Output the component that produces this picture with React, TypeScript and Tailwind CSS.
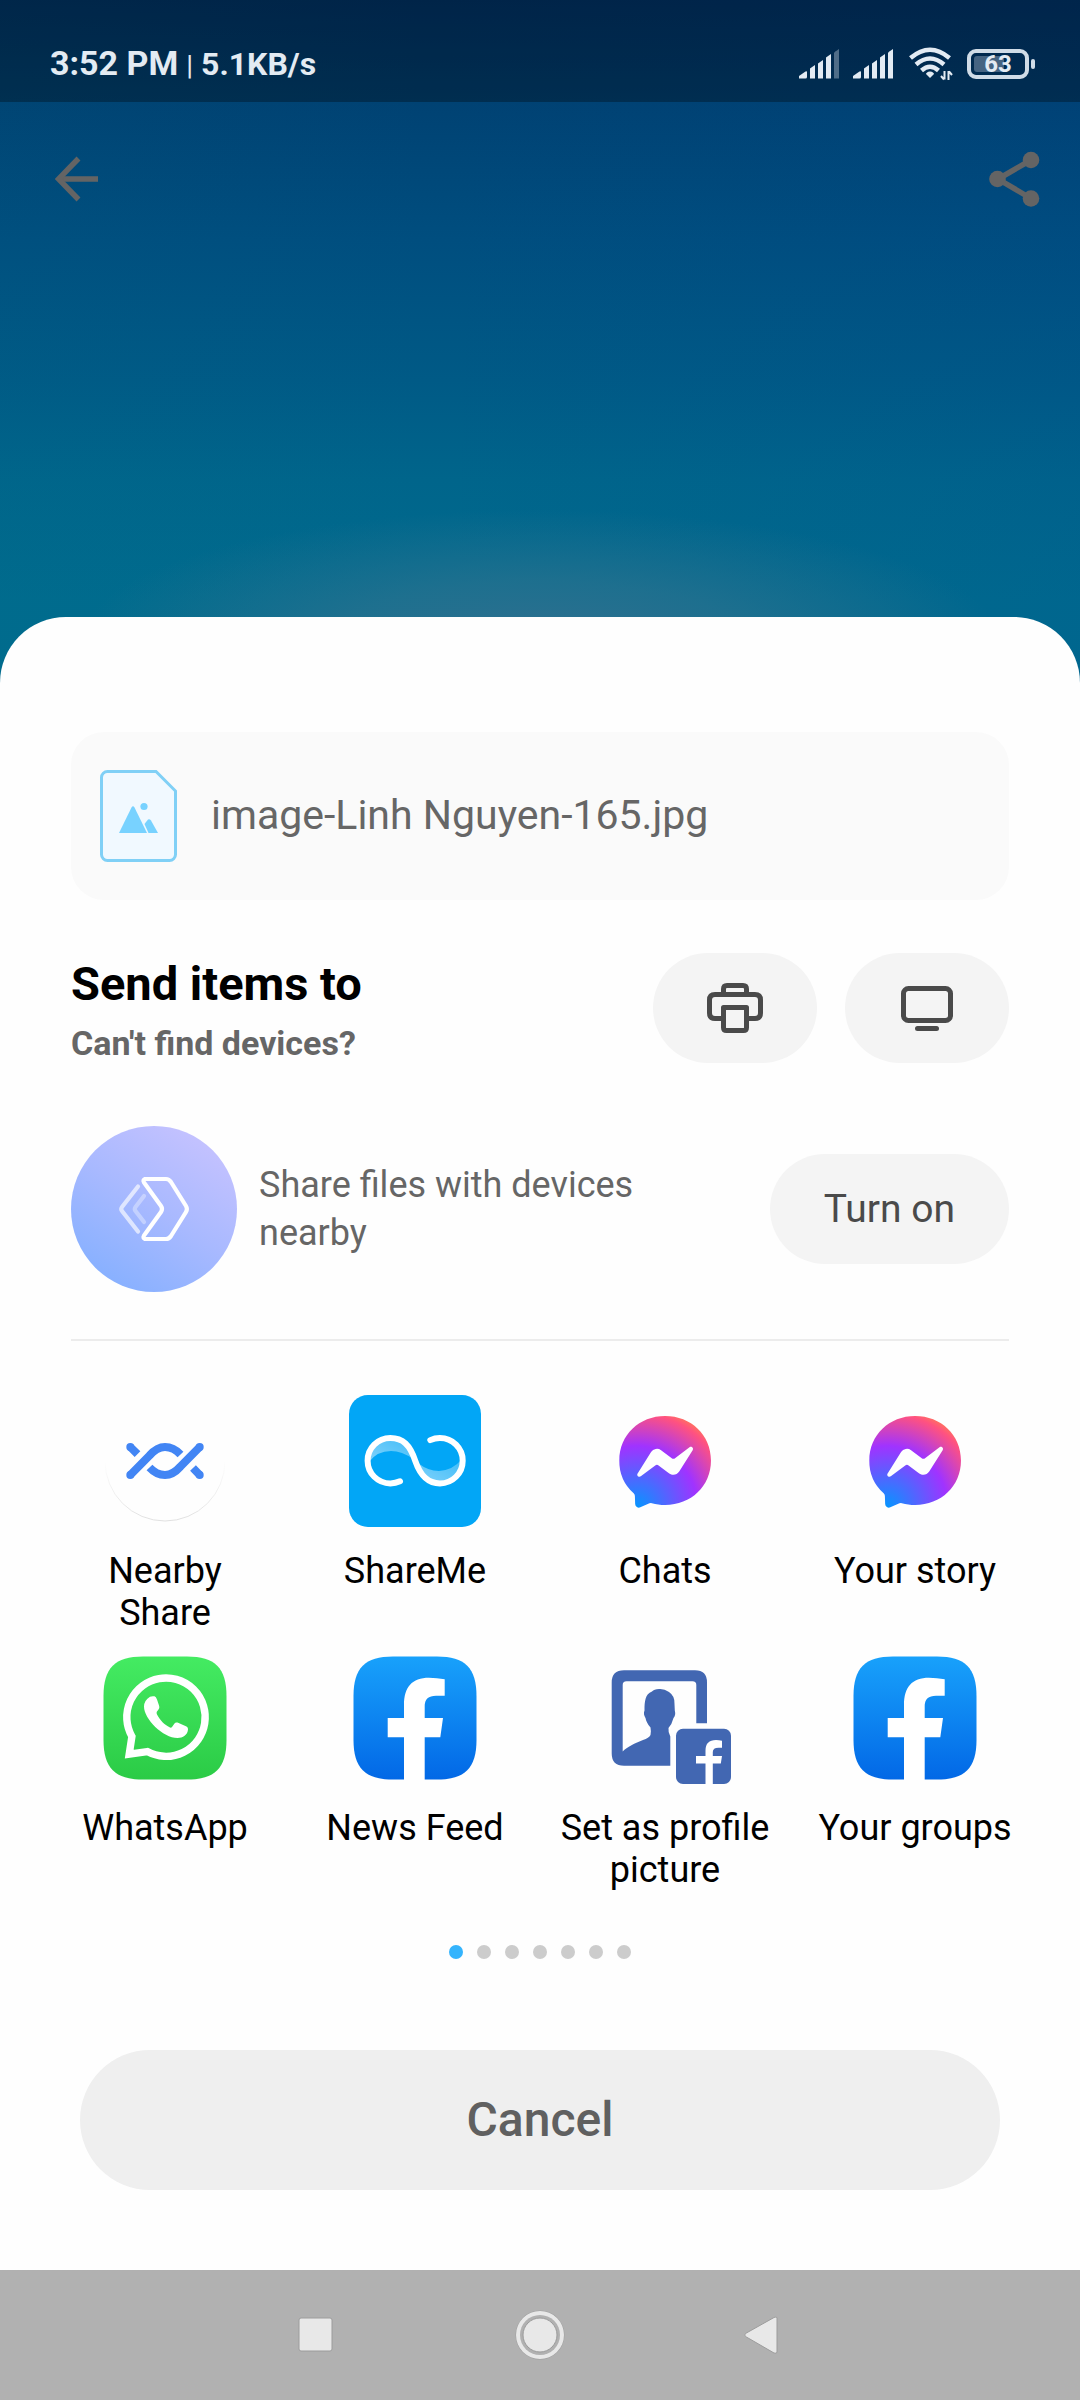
import type { ReactNode } from "react";

function SignalIcon({ weak = false }: { weak?: boolean }) {
  return (
    <svg width="40" height="30" viewBox="0 0 40 30" fill="#e3ebf3" aria-hidden="true">
      <path d="M0 29.5V27L6.500 22.5Q8 21.8 8 23V28Q8 29.5 6.5 29.5Z" />
      <path d="M11 19.5L16 16V29.5H11Z" />
      <path d="M19 14.5L24 11V29.5H19Z" />
      <path d="M27 8.5L32 5V29.5H27Z" />
      <path d="M35 4Q35 3 40 0V29.5H35Z" opacity={weak ? 0.35 : 1} />
    </svg>
  );
}

function WifiIcon() {
  return (
    <svg width="44" height="34" viewBox="0 0 44 34" fill="none" stroke="#e3ebf3" strokeWidth="4.5" aria-hidden="true">
      <path d="M1.5 11Q21 -5.5 40.5 11" />
      <path d="M7 17.5Q21 5.5 35 17.5" />
      <path d="M12.5 23.5Q21 16 29.5 23.5" />
      <path d="M21 24.5C23.5 24.5 25 26 25 27L21 31L17 27C17 26 18.5 24.5 21 24.5Z" fill="#e3ebf3" stroke="none" />
      <path d="M35.5 24V32.5M39.5 33V24M32 29L35 32.5M43 28L40 24.5" strokeWidth="2" />
    </svg>
  );
}

function StatusBar() {
  return (
    <div className="flex h-[102px] items-center justify-between bg-black/30 pt-11 pr-[45px] pb-[18px] pl-[50px] font-bold text-[#e3ebf3]">
      <div className="flex items-baseline gap-2">
        <span className="text-[34px] leading-10">3:52 PM</span>
        <span className="text-[28px] leading-10 font-normal">|</span>
        <span className="text-[32px] leading-10">5.1KB/s</span>
      </div>
      <div className="flex items-center">
        <SignalIcon weak />
        <span className="w-3.5" />
        <SignalIcon />
        <span className="w-4" />
        <WifiIcon />
        <span className="w-3.5" />
        <div className="relative flex h-[30px] w-[62px] items-center justify-center rounded-[9px] border-4 border-[#d0dce7]">
          <span className="absolute top-[3px] left-[3px] h-4 w-[30px] rounded-[3px] bg-[#456482]" />
          <span className="relative text-[24px] leading-6 font-bold">63</span>
        </div>
        <span className="ml-0.5 h-[10px] w-1 rounded-sm bg-[#d0dce7]" />
      </div>
    </div>
  );
}

function PreviewHeader() {
  return (
    <div className="flex h-[515px] items-start justify-between pt-[49px] pr-10 pl-[55px]">
      <button type="button" aria-label="Back">
        <svg width="44" height="56" viewBox="0 0 44 56" fill="none" stroke="#646464" strokeWidth="5.5" aria-hidden="true">
          <path d="M3 28H43" />
          <path d="M23.5 7.5L3.5 28L23.5 48.5" />
        </svg>
      </button>
      <button type="button" aria-label="Share">
        <svg width="51" height="56" viewBox="0 0 51 56" fill="#646464" aria-hidden="true">
          <path d="M42 9L9 28L42 47.5" fill="none" stroke="#646464" strokeWidth="5.5" />
          <circle cx="42" cy="9" r="8.3" />
          <circle cx="8.5" cy="28" r="8.3" />
          <circle cx="42" cy="47.5" r="8.3" />
        </svg>
      </button>
    </div>
  );
}

function ImageFileIcon() {
  return (
    <svg width="77" height="92" viewBox="0 0 77 92" aria-hidden="true">
      <path
        d="M7.5 1.5H56L75.5 21V84.5A6 6 0 0 1 69.5 90.5H7.5A6 6 0 0 1 1.5 84.5V7.5A6 6 0 0 1 7.5 1.5Z"
        fill="#f1f9ff"
        stroke="#80d0f6"
        strokeWidth="3"
      />
      <path d="M19 63L31.5 37.5Q33 35 34.5 37.5L47 63Z" fill="#78d2ff" />
      <path d="M44.500 54L48 49.5Q49.5 48.5 51 50.5L58 63H48.5Z" fill="#78d2ff" />
      <circle cx="44" cy="36.5" r="3.6" fill="#78d2ff" />
    </svg>
  );
}

function PrinterIcon() {
  return (
    <svg width="56" height="50" viewBox="0 0 56 50" fill="none" stroke="#4a4a4a" strokeWidth="5" aria-hidden="true">
      <path d="M16.5 11V6Q16.5 2.5 20 2.5H36Q39.5 2.5 39.5 6V11" />
      <path d="M16 35.5H8Q2.5 35.5 2.5 30V17Q2.5 11.5 8 11.5H48Q53.5 11.5 53.5 17V30Q53.5 35.5 48 35.5H40" />
      <path d="M16.5 24.5H39.5V44.5Q39.5 47.5 36.5 47.5H19.5Q16.5 47.5 16.5 44.5Z" strokeLinejoin="round" />
    </svg>
  );
}

function ScreenIcon() {
  return (
    <svg width="52" height="45" viewBox="0 0 52 45" fill="none" stroke="#4a4a4a" strokeWidth="5" aria-hidden="true">
      <rect x="2.5" y="2.5" width="47" height="32" rx="5" />
      <path d="M16.5 42.5H35.5" strokeLinecap="round" />
    </svg>
  );
}

function DeviceShareIcon() {
  return (
    <svg width="166" height="166" viewBox="0 0 166 166" fill="none" className="shrink-0" aria-hidden="true">
      <defs>
        <linearGradient id="device" x1="0.2" y1="0.95" x2="0.8" y2="0.05">
          <stop offset="0" stopColor="#86b0ff" />
          <stop offset="0.5" stopColor="#a8b9ff" />
          <stop offset="1" stopColor="#c5c2ff" />
        </linearGradient>
      </defs>
      <circle cx="83" cy="83" r="83" fill="url(#device)" />
      <g stroke="#fff" strokeWidth="4.2" strokeLinecap="round" strokeLinejoin="round">
        <path d="M74 53H95Q98 53 100 56L115 80Q116.8 83 115 86L100 110Q98 113 95 113H74Q71.5 112 73 109.5L90 86Q92 83 90 80L73 56.5Q71.5 54 74 53Z" />
        <path d="M67 60.5L51 81Q49.5 83 51 85L67 105.5" opacity="0.65" />
        <path d="M73 70L64.5 81Q63 83 64.5 85L73 96" opacity="0.35" />
      </g>
    </svg>
  );
}

const iconBox = { width: 132, height: 132, viewBox: "0 0 132 132", "aria-hidden": true } as const;

function NearbyShareLogo() {
  return (
    <svg {...iconBox} fill="none">
      <defs>
        <linearGradient id="rim" x1="0" y1="0" x2="0" y2="1">
          <stop offset="0.5" stopColor="#e4e4e4" stopOpacity="0" />
          <stop offset="1" stopColor="#e0e0e0" />
        </linearGradient>
      </defs>
      <circle cx="66" cy="66" r="60" stroke="url(#rim)" />
      <g stroke="#4285f4" strokeWidth="8">
        <path d="M31.3 52L38.5 59.2M94 73L100.7 80" />
        <path d="M31.3 80L50.5 60.5Q58 52 66 52Q74.5 52 81.5 59.5" />
        <path d="M50.5 72.5Q57.5 80 66 80Q74 80 81.5 71.5L100.7 52" />
      </g>
      <g fill="#4285f4">
        <circle cx="31.3" cy="52" r="4" />
        <circle cx="31.3" cy="80" r="4" />
        <circle cx="100.7" cy="52" r="4" />
        <circle cx="100.7" cy="80" r="4" />
      </g>
    </svg>
  );
}

function ShareMeLogo() {
  return (
    <svg {...iconBox} fill="none">
      <defs>
        <linearGradient id="wave" x1="0" y1="1" x2="1" y2="0">
          <stop offset="0" stopColor="#fff" stopOpacity="0.5" />
          <stop offset="1" stopColor="#fff" stopOpacity="0.25" />
        </linearGradient>
      </defs>
      <rect width="132" height="132" rx="19" fill="#02a6f6" />
      <path d="M20 67A22.7 22.7 0 0 1 41.3 43C54 43 60 51 64 64Q53 56 42 56Q28 56 20 67Z" fill="url(#wave)" />
      <path d="M112 65A22.7 22.7 0 0 1 91 88.4C79 88.4 73 81 69 68Q79 76 90 76Q104 75 112 65Z" fill="url(#wave)" />
      <path
        d="M51 86.3A22.7 22.7 0 0 1 41.3 88.4A22.7 22.7 0 0 1 41.3 43C54 43 61 50 66.2 65.7C71.5 81 79 88.4 91 88.4A22.7 22.7 0 0 0 91 43A22.7 22.7 0 0 0 81.3 45.1"
        stroke="#fff"
        strokeWidth="6"
        strokeLinecap="round"
      />
    </svg>
  );
}

function MessengerLogo() {
  return (
    <svg {...iconBox}>
      <defs>
        <radialGradient id="messenger" cx="0.19" cy="0.99" r="1.09">
          <stop offset="0" stopColor="#0695ff" />
          <stop offset="0.61" stopColor="#a033ff" />
          <stop offset="0.935" stopColor="#ff5280" />
          <stop offset="1" stopColor="#ff7061" />
        </radialGradient>
      </defs>
      <g transform="translate(20.3 21) scale(3.82)">
        <path
          fill="url(#messenger)"
          d="M.001 11.639C.001 4.95 5.241 0 12.001 0S24 4.95 24 11.639c0 6.689-5.24 11.638-12 11.638-1.21 0-2.38-.16-3.47-.46a.96.96 0 0 0-.64.05l-2.39 1.05a.96.96 0 0 1-1.35-.85l-.07-2.14a.97.97 0 0 0-.32-.68A11.39 11.389 0 0 1 .002 11.64zm8.32-2.19l-3.52 5.6c-.35.53.32 1.139.82.75l3.79-2.87c.26-.2.6-.2.87 0l2.8 2.1c.84.63 2.04.4 2.6-.48l3.52-5.6c.35-.53-.32-1.13-.82-.75l-3.79 2.87c-.25.2-.6.2-.86 0l-2.8-2.1a1.8 1.8 0 0 0-2.61.48z"
        />
      </g>
    </svg>
  );
}

const roundedTile =
  "M44 4.5H88C116 4.5 127.5 16 127.5 44V88C127.5 116 116 127.5 88 127.5H44C16 127.5 4.5 116 4.5 88V44C4.5 16 16 4.5 44 4.5Z";

function WhatsAppLogo() {
  return (
    <svg {...iconBox} fill="none">
      <defs>
        <linearGradient id="whatsapp" x1="0" y1="0" x2="0" y2="1">
          <stop offset="0" stopColor="#44eb62" />
          <stop offset="1" stopColor="#2bcb46" />
        </linearGradient>
      </defs>
      <path d={roundedTile} fill="url(#whatsapp)" />
      <path d="M48.3 99.6L30.2 102.2L32.9 84.5A39.2 39.2 0 1 1 48.3 99.6Z" stroke="#fff" strokeWidth="7.4" />
      <path
        d="M51 44.8Q53 43.8 55.5 44.3Q57 44.8 58 47.5L60.2 54Q60.8 56 59.5 57.5L57.8 59.8Q57.2 60.8 58 62.5C61.5 68.5 65 72.5 71 75.5Q72.3 76 73 75L75.5 71.5Q76.5 70 78.5 70.6L87.5 74.5Q89.3 75.5 89 77.5C88.5 83 84 86 78.5 86C64 86 45 67 45 54.5Q45.2 48.3 51 44.8Z"
        fill="#fff"
      />
    </svg>
  );
}

function FacebookLogo() {
  return (
    <svg {...iconBox}>
      <defs>
        <linearGradient id="facebook" x1="0" y1="0" x2="0" y2="1">
          <stop offset="0" stopColor="#18a1fb" />
          <stop offset="1" stopColor="#0268e6" />
        </linearGradient>
      </defs>
      <path d={roundedTile} fill="url(#facebook)" />
      <path
        d="M55 128V85.3H38.7V66H55V53C55 35 63 25.7 80 25.7Q88 25.7 95.7 27.3V43.7H87Q75.7 43.7 75.7 54V66H94L91.3 85.3H75.7V128Z"
        fill="#fff"
      />
    </svg>
  );
}

function ProfilePictureLogo() {
  return (
    <svg {...iconBox} fill="#4267b2">
      <path d="M25 18.3H96Q108 18.3 108 30.5V71.3H97.3V33Q97.3 29.3 93.5 29.3H27.5Q23.7 29.3 23.7 33V99.5C28 95 36 91 44 88Q50 86 51.500 83C52 80.5 52 78 51.5 75.5C48.5 72 47 69 46.500 66Q44 62 45.500 58.5C45.500 50 46 42 53 39.500Q55 37 60 37Q65 36.500 70 40Q76 44 75.5 52L75.8 58.5Q77 63 74.5 66Q73 72 69.5 76Q69 80 71.3 84.5V113.7H25Q12.7 113.7 12.7 101.5V30.5Q12.7 18.3 25 18.3Z" />
      <rect x="77" y="76.7" width="55" height="55.3" rx="7" />
      <path
        d="M106.5 132V111.500H97V104H106.5V98.5Q106.5 88 117 88Q120 88 123 88.7V95.7H119.5Q113.8 95.7 113.8 100V104H123L121.8 111.5H113.8V132Z"
        fill="#fff"
      />
    </svg>
  );
}

const apps: { label: string; logo: ReactNode }[] = [
  { label: "Nearby Share", logo: <NearbyShareLogo /> },
  { label: "ShareMe", logo: <ShareMeLogo /> },
  { label: "Chats", logo: <MessengerLogo /> },
  { label: "Your story", logo: <MessengerLogo /> },
  { label: "WhatsApp", logo: <WhatsAppLogo /> },
  { label: "News Feed", logo: <FacebookLogo /> },
  { label: "Set as profile picture", logo: <ProfilePictureLogo /> },
  { label: "Your groups", logo: <FacebookLogo /> },
];

function PillButton({ label, children }: { label?: string; children: ReactNode }) {
  return (
    <button
      type="button"
      aria-label={label}
      className="flex h-[110px] min-w-[164px] shrink-0 items-center justify-center rounded-full bg-[#f4f4f4] px-[54px] text-[39px] text-[#4a4a4a]"
    >
      {children}
    </button>
  );
}

function ShareSheet() {
  return (
    <main className="flex grow flex-col rounded-t-[66px] bg-[#fefefe] px-10 pt-[115px] pb-20">
      <div className="mx-[31px] flex h-[168px] items-center gap-[34px] rounded-[33px] bg-[#fafafa] px-[29px]">
        <ImageFileIcon />
        <span className="text-[41px] text-[#666666]">image-Linh Nguyen-165.jpg</span>
      </div>

      <div className="mx-[31px] mt-[53px] flex items-end justify-between">
        <div className="flex flex-col items-start gap-3">
          <h1 className="text-[47px] leading-[54px] font-bold text-black">Send items to</h1>
          <a href="#devices" className="text-[34px] leading-10 font-bold text-[#666666]">
            Can't find devices?
          </a>
        </div>
        <div className="flex gap-7">
          <PillButton label="Print">
            <PrinterIcon />
          </PillButton>
          <PillButton label="Cast to screen">
            <ScreenIcon />
          </PillButton>
        </div>
      </div>

      <div className="mx-[31px] mt-[63px] flex items-center">
        <DeviceShareIcon />
        <p className="ml-[22px] max-w-[420px] grow text-[36px] leading-12 text-[#666666]">
          Share files with devices nearby
        </p>
        <span className="grow" />
        <PillButton>Turn on</PillButton>
      </div>

      <hr className="mx-[31px] mt-[47px] border-t-2 border-[#ececec]" />

      <ul className="mt-[54px] grid grid-cols-4 gap-y-[18px]">
        {apps.map((app) => (
          <li key={app.label} className="flex justify-center">
            <button type="button" className="flex min-h-[239px] flex-col items-center gap-[23px]">
              {app.logo}
              <span className="max-w-[212px] text-[36px] leading-[42px] text-black">{app.label}</span>
            </button>
          </li>
        ))}
      </ul>

      <div className="mt-[54px] flex justify-center gap-3.5">
        {[0, 1, 2, 3, 4, 5, 6].map((page) => (
          <span
            key={page}
            className={page === 0 ? "size-3.5 rounded-full bg-[#34b4fd]" : "size-3.5 rounded-full bg-[#cccccc]"}
          />
        ))}
      </div>

      <button
        type="button"
        className="mx-10 mt-[91px] h-[140px] rounded-full bg-[#efefef] text-[48px] font-medium text-[#606060]"
      >
        Cancel
      </button>
    </main>
  );
}

function NavigationBar() {
  return (
    <nav className="flex h-[130px] items-center justify-center gap-[175px] bg-[#b1b1b1]">
      <button type="button" aria-label="Recent apps">
        <svg width="50" height="50" viewBox="0 0 50 50" aria-hidden="true">
          <rect x="9" y="8" width="33" height="33" rx="2" fill="#e8e8e8" stroke="#9c9c9c" />
        </svg>
      </button>
      <button type="button" aria-label="Home">
        <svg width="50" height="50" viewBox="0 0 50 50" fill="none" aria-hidden="true">
          <circle cx="25" cy="25" r="24.5" fill="#9f9f9f" />
          <circle cx="25" cy="25" r="24" fill="#e8e8e8" />
          <circle cx="25" cy="25" r="20" fill="#b1b1b1" />
          <circle cx="25" cy="25" r="17" fill="#e8e8e8" stroke="#9c9c9c" />
        </svg>
      </button>
      <button type="button" aria-label="Back">
        <svg width="50" height="50" viewBox="0 0 50 50" aria-hidden="true">
          <path d="M5.5 23.5Q4 25 5.5 26.5L34 43Q37 44 37 42V8Q37 6 34 7.5Z" fill="#e8e8e8" stroke="#9c9c9c" />
        </svg>
      </button>
    </nav>
  );
}

export default function App() {
  return (
    <div className="flex min-h-screen flex-col bg-[radial-gradient(ellipse_460px_130px_at_50%_640px,#33708fe6,#2b728fb0_45%,#00678c00),linear-gradient(90deg,#00708010,#00408000_40%,#0040901c),linear-gradient(180deg,#003468,#004273_102px,#004e7f_240px,#005a86_380px,#00658b_480px,#006b8e_600px)] font-['Roboto',sans-serif]">
      <StatusBar />
      <PreviewHeader />
      <ShareSheet />
      <NavigationBar />
    </div>
  );
}
